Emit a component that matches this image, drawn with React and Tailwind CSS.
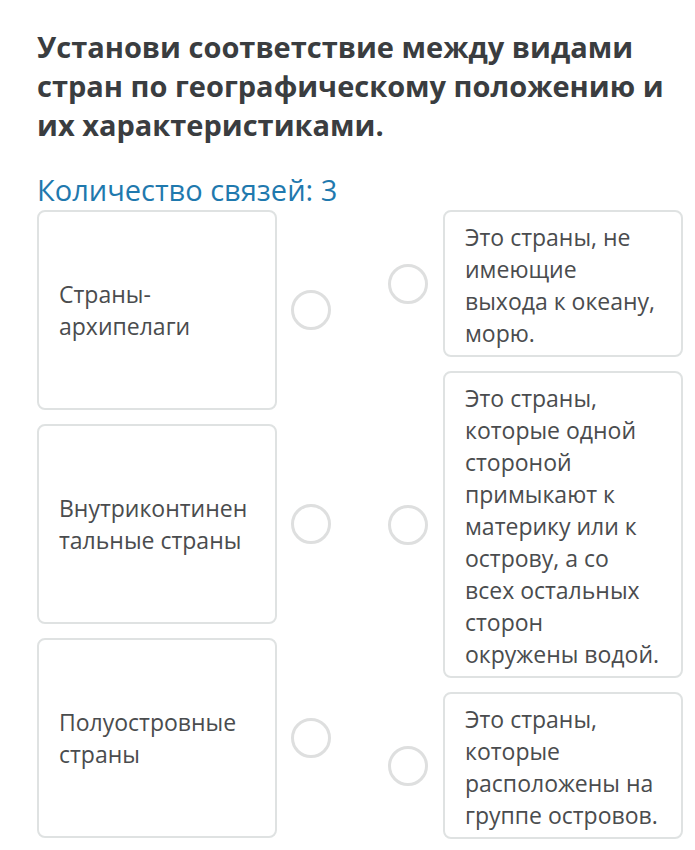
const leftItems = [
  ["Страны-", "архипелаги"],
  ["Внутриконтинен", "тальные страны"],
  ["Полуостровные", "страны"],
];

const rightItems = [
  "Это страны, не имеющие выхода к океану, морю.",
  "Это страны, которые одной стороной примыкают к материку или к острову, а со всех остальных сторон окружены водой.",
  "Это страны, которые расположены на группе островов.",
];

function Dot() {
  return <div className="w-10 h-10 shrink-0 rounded-full border-[3px] border-[#dedfdf]" />;
}

export default function App() {
  return (
    <div className="min-h-[850px] bg-white pl-[37px] pr-2 pt-[27px] font-['Open_Sans',sans-serif]">
      <h1 className="text-[29px] leading-[39px] font-bold text-[#3a3d40]">
        Установи соответствие между видами стран по географическому положению и их характеристиками.
      </h1>
      <p className="mt-[28px] text-[29px] leading-[36px] text-[#1f79ae]">Количество связей: 3</p>

      <div className="flex mt-[2px]">
        <div className="flex flex-col gap-[14px]">
          {leftItems.map((lines, i) => (
            <div key={i} className="flex items-center gap-[14px]">
              <div className="w-[240px] h-[200px] rounded-lg border-2 border-[#dfe2e2] flex items-center px-5 text-[23px] leading-[32px] text-[#4a4c4e]">
                <div>
                  {lines[0]}
                  <br />
                  {lines[1]}
                </div>
              </div>
              <Dot />
            </div>
          ))}
        </div>

        <div className="flex flex-col gap-[14px] ml-[57px]">
          {rightItems.map((text, i) => (
            <div key={i} className="flex items-center gap-[15px]">
              <Dot />
              <div className="w-[240px] rounded-lg border-2 border-[#dfe2e2] px-5 pt-[9px] pb-[6px] text-[23px] leading-[32px] text-[#4a4c4e]">
                {text}
              </div>
            </div>
          ))}
        </div>
      </div>
    </div>
  );
}
